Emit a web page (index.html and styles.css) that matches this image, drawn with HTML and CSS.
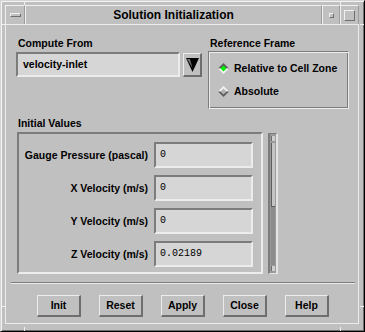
FILE: index.html
```html
<!DOCTYPE html>
<html>
<head>
<link rel="stylesheet" href="styles.css">
</head>
<body>
<div class="window">
  <div class="titlebar">
    <div class="tb-cell tb-menu"><span class="menu-bar"></span></div>
    <div class="tb-cell tb-title">Solution Initialization</div>
    <div class="tb-cell tb-min"><span class="min-box"></span></div>
    <div class="tb-cell tb-max"><span class="max-box"></span></div>
  </div>

  <div class="client">
    <div class="top">
      <div class="compute">
        <div class="label">Compute From</div>
        <div class="combo">
          <div class="field">velocity-inlet</div>
          <div class="arrow-btn">
            <svg width="13" height="14" viewBox="0 0 13 14">
              <polygon points="0,0 13,0 6.5,14" fill="#000"/>
              <polygon points="1,1 4,1 6.5,10" fill="#6e6e6e"/>
            </svg>
          </div>
        </div>
      </div>
      <div class="ref">
        <div class="label">Reference Frame</div>
        <div class="radio-box">
          <div class="radio">
            <svg width="11" height="11" viewBox="0 0 11 11">
              <polygon points="0,5.5 5.5,0 11,5.5" fill="#5e5e5e"/>
              <polygon points="0,5.5 5.5,11 11,5.5" fill="#f2f2f2"/>
              <polygon points="2.5,5.5 5.5,2.5 8.5,5.5 5.5,8.5" fill="#00f000"/>
            </svg>
            <span>Relative to Cell Zone</span>
          </div>
          <div class="radio">
            <svg width="11" height="11" viewBox="0 0 11 11">
              <polygon points="0,5.5 5.5,0 11,5.5" fill="#f2f2f2"/>
              <polygon points="0,5.5 5.5,11 11,5.5" fill="#5e5e5e"/>
              <polygon points="2.5,5.5 5.5,2.5 8.5,5.5 5.5,8.5" fill="#b4b4b4"/>
            </svg>
            <span>Absolute</span>
          </div>
        </div>
      </div>
    </div>

    <div class="initial">
      <div class="label">Initial Values</div>
      <div class="scroll-row">
        <div class="panel">
          <div class="row-label">Gauge Pressure (pascal)</div>
          <div class="entry">0</div>
          <div class="row-label">X Velocity (m/s)</div>
          <div class="entry">0</div>
          <div class="row-label">Y Velocity (m/s)</div>
          <div class="entry">0</div>
          <div class="row-label">Z Velocity (m/s)</div>
          <div class="entry">0.02189</div>
        </div>
        <div class="scrollbar">
          <div class="sb-arrow"></div>
          <div class="sb-slider"></div>
          <div class="sb-trough"></div>
          <div class="sb-arrow"></div>
        </div>
      </div>
    </div>

    <div class="separator"></div>

    <div class="buttons">
      <div class="btn">Init</div>
      <div class="btn">Reset</div>
      <div class="btn">Apply</div>
      <div class="btn">Close</div>
      <div class="btn">Help</div>
    </div>
  </div>

  <span class="notch v top-l"></span>
  <span class="notch v top-r"></span>
  <span class="notch v bot-l"></span>
  <span class="notch v bot-r"></span>
  <span class="notch h left-t"></span>
  <span class="notch h left-b"></span>
  <span class="notch h right-t"></span>
  <span class="notch h right-b"></span>
</div>
</body>
</html>
```

FILE: styles.css
```css
body { margin: 0; background: #c0c0c0; }

.window {
  position: relative;
  width: 365px; height: 332px;
  box-sizing: border-box;
  background: #c0c0c0;
  border: 1px solid; border-color: #d4d4d4 #000 #000 #d4d4d4;
  box-shadow: inset 1px 1px 0 #f4f4f4, inset -1px -1px 0 #6e6e6e;
  padding: 4px 5px 7px 4px;
  display: flex; flex-direction: column;
  font-family: "Liberation Sans", Arial, sans-serif;
  font-weight: bold; font-size: 10.5px; color: #000;
}

/* title bar */
.titlebar { display: flex; height: 19px; }
.tb-cell {
  box-sizing: border-box; height: 19px;
  border-top: 1px solid #f0f0f0; border-left: 1px solid #f0f0f0;
  border-right: 1px solid #9c9c9c;
  display: flex; align-items: center; justify-content: center;
}
.tb-menu  { width: 20px; }
.tb-title { width: 297px; font-size: 12px; line-height: 18px; }
.tb-min   { width: 18px; }
.tb-max   { width: 19px; }
.menu-bar {
  width: 11px; height: 4px; box-sizing: border-box;
  border: 1px solid; border-color: #f0f0f0 #6e6e6e #6e6e6e #f0f0f0;
}
.min-box {
  width: 5px; height: 5px; box-sizing: border-box;
  border: 1px solid; border-color: #f0f0f0 #6e6e6e #6e6e6e #f0f0f0;
}
.max-box {
  width: 11px; height: 11px; box-sizing: border-box;
  border: 1px solid; border-color: #f0f0f0 #6e6e6e #6e6e6e #f0f0f0;
}

/* client area */
.client {
  flex: 1;
  box-sizing: border-box;
  border: 1px solid #ececec;
  display: flex; flex-direction: column;
}
.label { height: 13px; line-height: 13px; padding-left: 2px; white-space: nowrap; }

.top { display: flex; gap: 6px; margin: 12px 0 0 10px; }
.compute { width: 186px; }
.compute .label { margin-bottom: 2px; }
.combo { display: flex; gap: 3px; align-items: flex-start; }
.field {
  width: 164px; height: 25px; box-sizing: border-box;
  border: 2px solid; border-color: #7c7c7c #ececec #ececec #7c7c7c;
  background: #d6d6d6;
  padding-left: 5px; line-height: 21px;
}
.arrow-btn {
  width: 19px; height: 24px; margin-top: 1px; box-sizing: border-box;
  border-style: solid; border-width: 1px 2px 2px 1px;
  border-color: #ececec #6e6e6e #6e6e6e #ececec;
  display: flex; align-items: center; justify-content: center;
}

.ref { width: 141px; }
.ref .label { margin-bottom: 1px; }
.radio-box {
  height: 58px; box-sizing: border-box;
  border: 1px solid; border-color: #7c7c7c #ececec #ececec #7c7c7c;
  box-shadow: inset 1px 1px 0 #ececec, inset -1px -1px 0 #7c7c7c;
  padding: 8px 0 0 9px;
  display: flex; flex-direction: column; gap: 7px;
}
.radio { display: flex; align-items: center; gap: 5px; height: 16px; white-space: nowrap; }

/* initial values */
.initial { margin: 8px 0 0 11px; }
.initial .label { padding-left: 1px; margin-bottom: 2px; }
.scroll-row { display: flex; gap: 5px; align-items: flex-start; }
.panel {
  width: 246px; height: 142px; box-sizing: border-box;
  border: 2px solid; border-color: #7c7c7c #ececec #ececec #7c7c7c;
  padding-top: 8px;
  display: grid;
  grid-template-columns: 130px 99px;
  grid-auto-rows: 26px;
  column-gap: 5px; row-gap: 7px;
  align-content: start;
}
.row-label { text-align: right; line-height: 26px; white-space: nowrap; padding-right: 1px; }
.entry {
  box-sizing: border-box;
  border: 2px solid; border-color: #7c7c7c #ececec #ececec #7c7c7c;
  background: #d6d6d6;
  font-family: "Liberation Mono", "DejaVu Sans Mono", monospace;
  font-weight: normal; font-size: 10px;
  line-height: 22px; padding-left: 4px;
}

.scrollbar {
  width: 10px; height: 141px; margin-top: 1px; box-sizing: border-box;
  border-style: solid; border-width: 1px 2px 1px 2px;
  border-color: #7c7c7c #e4e4e4 #e4e4e4 #7c7c7c;
  background: #9a9a9a;
  display: flex; flex-direction: column;
  padding: 1px 0;
}
.sb-arrow {
  height: 5px; margin: 1px 1px; box-sizing: border-box;
  background: #cfcfcf; border-left: 1px solid #6e6e6e;
}
.sb-slider {
  height: 64px; margin: 1px 1px 0 1px; box-sizing: border-box;
  background: #c4c4c4; border-left: 1px solid #5e5e5e; border-bottom: 1px solid #5e5e5e;
}
.sb-trough { flex: 1; background: #8c8c8c; margin: 0 1px; }

.separator {
  height: 2px; margin: 8px 3px 0 5px; box-sizing: border-box;
  border-top: 1px solid #7c7c7c; border-bottom: 1px solid #ececec;
}

.buttons { display: flex; gap: 18px; margin: 11px 0 0 31px; }
.btn {
  width: 44px; height: 22px; box-sizing: border-box;
  border-style: solid; border-width: 1px 2px 2px 1px;
  border-color: #ececec #6e6e6e #6e6e6e #ececec;
  text-align: center; line-height: 19px;
}

/* frame corner notches */
.notch { position: absolute; background: #f0f0f0; }
.notch.v { width: 1px; height: 4px; }
.notch.h { width: 4px; height: 1px; }
.top-l  { left: 23px;  top: 0; }
.top-r  { left: 339px; top: 0; }
.bot-l  { left: 23px;  bottom: 0; height: 7px; }
.bot-r  { left: 339px; bottom: 0; height: 7px; }
.left-t  { left: 0; top: 23px; }
.left-b  { left: 0; top: 305px; }
.right-t { right: 0; top: 23px; width: 5px; }
.right-b { right: 0; top: 305px; width: 5px; }
```
